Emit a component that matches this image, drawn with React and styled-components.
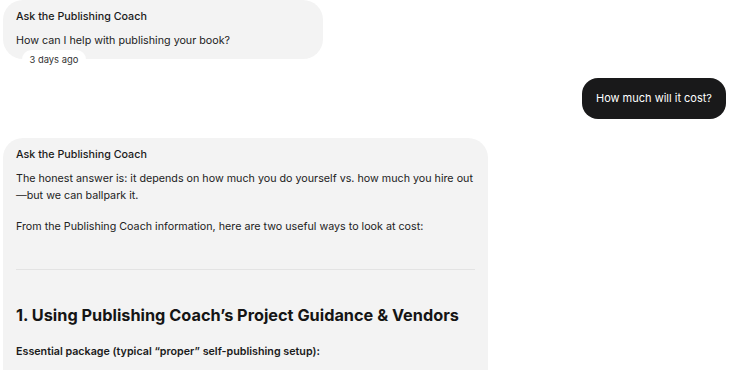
import React from "react";
import styled, { createGlobalStyle } from "styled-components";

const GlobalStyle = createGlobalStyle`
  html, body {
    margin: 0;
    padding: 0;
    background: #fff;
  }
  body {
    font-family: Inter, "Noto Sans", "Liberation Sans", sans-serif;
    color: #1a1a1a;
    -webkit-font-smoothing: antialiased;
  }
`;

const Thread = styled.div`
  display: flex;
  flex-direction: column;
  gap: 19px;
  padding: 0 23px 0 3px;
  width: 749px;
  height: 370px;
  box-sizing: border-box;
  overflow: hidden;
`;

const Row = styled.div`
  display: flex;
  justify-content: ${(p) => (p.$mine ? "flex-end" : "flex-start")};
`;

const CoachBubble = styled.div`
  position: relative;
  flex-shrink: 0;
  box-sizing: border-box;
  width: ${(p) => p.$width || "auto"};
  padding: 9px 13px ${(p) => (p.$long ? "40px" : "10px")};
  background: #f3f3f3;
  border-radius: 20px;
`;

const CoachName = styled.div`
  font-size: 10.72px;
  font-weight: 500;
  line-height: 16px;
  margin-bottom: 7px;
`;

const Text = styled.p`
  margin: 0 0 14px;
  font-size: 10.72px;
  line-height: 17px;
  color: #222;

  &:last-of-type {
    margin-bottom: 0;
  }
`;

const Stamp = styled.span`
  position: absolute;
  left: 19px;
  bottom: -10px;
  padding: 3px 7.5px;
  background: #fff;
  border-radius: 10px;
  font-size: 9.38px;
  line-height: 13px;
  color: #333;
`;

const UserBubble = styled.div`
  padding: 12px 14px;
  background: #19191a;
  color: #fff;
  border-radius: 16px;
  font-size: 11px;
  line-height: 17px;
`;

const Section = styled.div`
  display: flex;
  flex-direction: column;
`;

const Rule = styled.hr`
  border: 0;
  border-top: 1px solid #e3e3e3;
  margin: 34px 0 33px;
`;

const Heading = styled.h3`
  margin: 0 0 16px;
  font-size: 16.3px;
  line-height: 24px;
  font-weight: 700;
  color: #151515;
`;

const Strong = styled.p`
  margin: 0;
  font-size: 10.72px;
  line-height: 17px;
  font-weight: 600;
`;

export default function App() {
  return (
    <>
      <GlobalStyle />
      <Thread>
        <Row>
          <CoachBubble $width="320px">
            <CoachName>Ask the Publishing Coach</CoachName>
            <Text>How can I help with publishing your book?</Text>
            <Stamp>3 days ago</Stamp>
          </CoachBubble>
        </Row>
        <Row $mine>
          <UserBubble>How much will it cost?</UserBubble>
        </Row>
        <Row>
          <CoachBubble $width="485px" $long>
            <CoachName>Ask the Publishing Coach</CoachName>
            <Text>
              The honest answer is: it depends on how much you do yourself vs. how much you hire out
              —but we can ballpark it.
            </Text>
            <Text>
              From the Publishing Coach information, here are two useful ways to look at cost:
            </Text>
            <Section>
              <Rule />
              <Heading>1. Using Publishing Coach’s Project Guidance &amp; Vendors</Heading>
              <Strong>Essential package (typical “proper” self-publishing setup):</Strong>
            </Section>
          </CoachBubble>
        </Row>
      </Thread>
    </>
  );
}
